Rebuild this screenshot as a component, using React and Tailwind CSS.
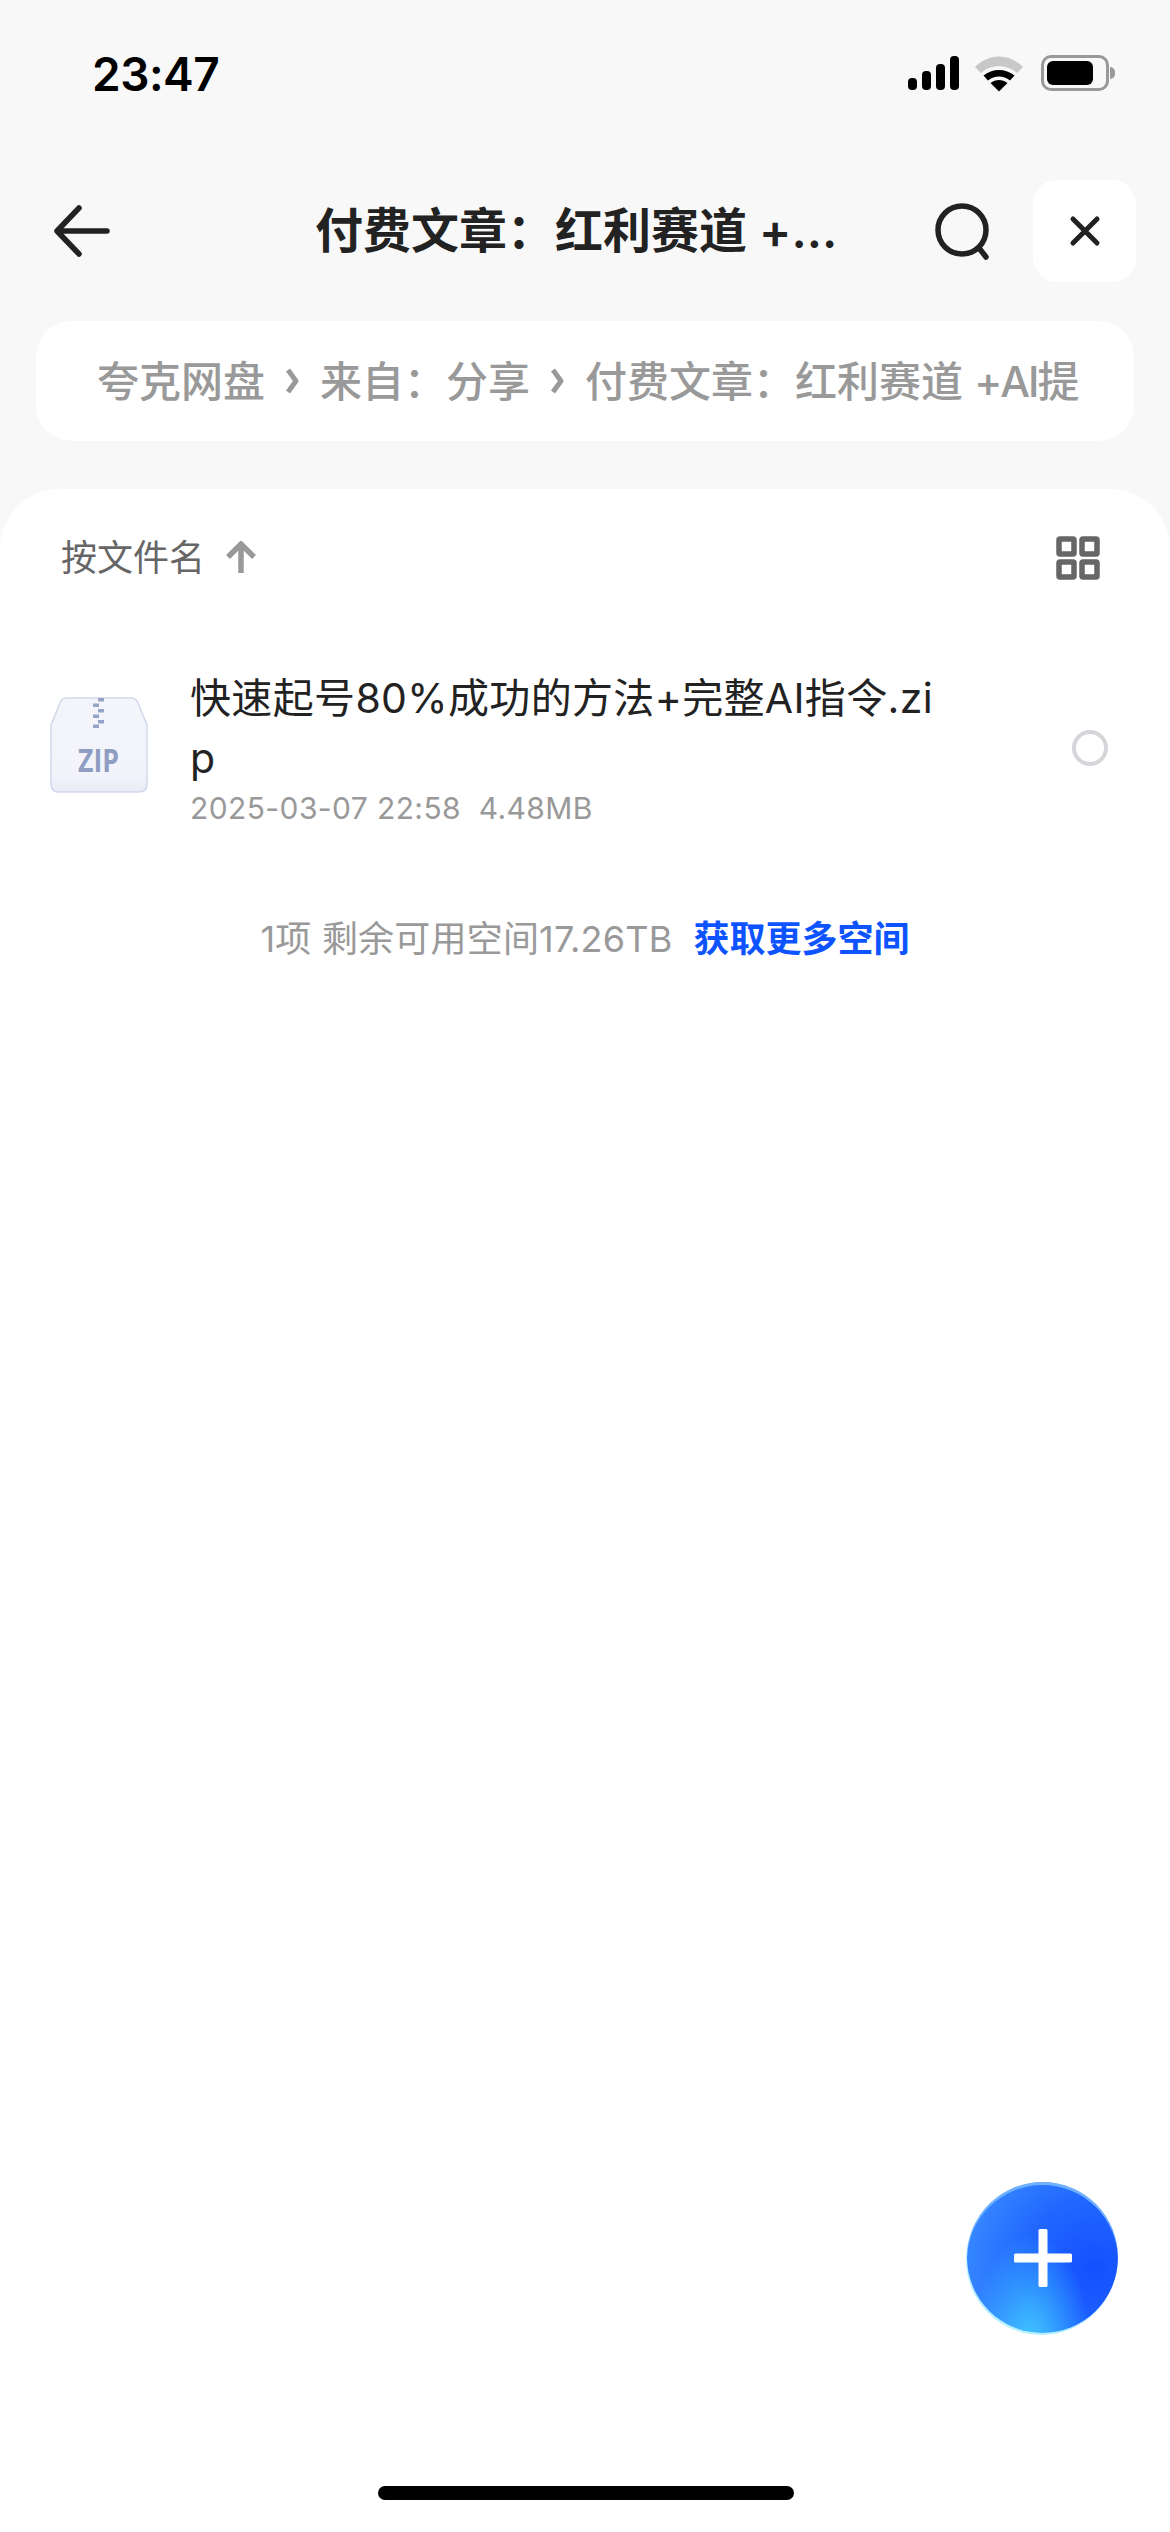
import React from 'react';

const font = { fontFamily: 'Inter, "Noto Sans CJK SC", sans-serif' };

const StatusIcons = () => (
  <div className="flex items-center">
    <svg width="52" height="36" viewBox="0 0 52 36" fill="#000">
      <rect x="0" y="23" width="9" height="12" rx="4" />
      <rect x="14" y="16" width="9" height="19" rx="4" />
      <rect x="28" y="9" width="9" height="26" rx="4" />
      <rect x="42" y="1" width="9" height="34" rx="4" />
    </svg>
    <svg className="ml-[14px]" width="50" height="38" viewBox="0 0 50 38">
      <path d="M1 13C15 -1 35 -1 49 13L43 19C33 10 17 10 7 19Z" fill="#c8c8c8" />
      <path d="M9.500 21.500C18 14 32 14 40.500 21.500L36 26.500C29.500 21 20.500 21 14 26.500Z" fill="#000" />
      <path d="M16.500 29C21.500 25 28.500 25 33.500 29L25 37.500Z" fill="#000" />
    </svg>
    <div className="ml-[17px] flex items-center">
      <div className="w-[68px] h-[36px] rounded-[10px] border-[3px] border-[#999999] p-[3px] pr-[13px]">
        <div className="w-full h-full rounded-[6px] bg-black" />
      </div>
      <div className="ml-[1px] w-[5px] h-[12px] rounded-r-full bg-[#999999]" />
    </div>
  </div>
);

const Crumb = () => (
  <svg className="mx-[20px] shrink-0" width="15" height="28" viewBox="0 0 15 28" fill="none">
    <path d="M3 3L11 14L3 25" stroke="#999999" strokeWidth="5" strokeLinejoin="round" />
  </svg>
);

const ZipIcon = () => (
  <svg width="98" height="96" viewBox="0 0 98 96">
    <defs>
      <linearGradient id="zipfill" x1="0" y1="0" x2="0" y2="1">
        <stop offset="0" stopColor="#f4f5fb" />
        <stop offset="0.8" stopColor="#f3f4fb" />
        <stop offset="1" stopColor="#e9ebf6" />
      </linearGradient>
    </defs>
    <path
      d="M10 6C11 3 13 1 17 1H81C85 1 87 3 88 6L97 28V87C97 92 94 95 89 95H9C4 95 1 92 1 87V28Z"
      fill="url(#zipfill)"
      stroke="#d3d8ec"
      strokeWidth="1.500"
    />
    <g fill="#95a3c6">
      <rect x="48" y="1" width="6" height="3.500" />
      <rect x="43" y="6.500" width="6" height="3.500" />
      <rect x="48" y="12" width="6" height="3.500" />
      <rect x="43" y="17.500" width="6" height="3.500" />
      <rect x="48" y="23" width="6" height="3.500" />
      <rect x="43" y="27.500" width="6" height="3.500" />
    </g>
    <text x="28" y="75" textLength="41" lengthAdjust="spacingAndGlyphs" fill="#8f9dc2" fontSize="33" fontWeight="700" fontFamily="Open Sans, sans-serif">ZIP</text>
  </svg>
);

const App = () => {
  return (
    <div className="relative w-[1170px] h-[2532px] overflow-hidden flex flex-col bg-[#f8f8f8]" style={font}>
      {/* status bar */}
      <div className="h-[150px] shrink-0 flex justify-between items-start pl-[92px] pr-[55px] pt-[44px]">
        <div className="text-[46px] leading-[60px] font-semibold text-black tracking-[-0.5px]">23:47</div>
        <div className="pt-[10px]"><StatusIcons /></div>
      </div>

      {/* nav */}
      <div className="h-[132px] shrink-0 flex items-center pl-[52px] pt-[30px]">
        <svg width="60" height="60" viewBox="0 0 60 60" fill="none" className="shrink-0">
          <path d="M55 30H6M27 7L5 30L27 53" stroke="#222222" strokeWidth="5.500" strokeLinecap="round" strokeLinejoin="round" />
        </svg>
        <div className="ml-[203px] w-[520px] shrink-0 text-[48px] font-semibold text-[#222222] whitespace-nowrap">
          付费文章：红利赛道 +...
        </div>
        <svg width="60" height="60" viewBox="0 0 60 60" fill="none" className="ml-[98px] shrink-0">
          <circle cx="29" cy="29" r="24" stroke="#222222" strokeWidth="5.500" />
          <path d="M46 47L53 56" stroke="#222222" strokeWidth="5.500" strokeLinecap="round" />
        </svg>
        <div className="ml-[40px] w-[103px] h-[102px] shrink-0 rounded-[24px] bg-white flex items-center justify-center">
          <svg width="32" height="32" viewBox="0 0 32 32" fill="none">
            <path d="M4 4L28 28M28 4L4 28" stroke="#222222" strokeWidth="5" strokeLinecap="round" />
          </svg>
        </div>
      </div>

      {/* breadcrumb */}
      <div className="mt-[39px] mx-[36px] w-[1098px] h-[120px] rounded-[36px] bg-white flex items-center pl-[61px] shrink-0">
        <div className="flex items-center whitespace-nowrap text-[42px] font-medium text-[#999999]">
          <span>夸克网盘</span>
          <Crumb />
          <span>来自：分享</span>
          <Crumb />
          <span>付费文章：红利赛道 <span className="tracking-[-2px]">+AI</span>提</span>
        </div>
      </div>

      {/* file sheet */}
      <div className="mt-[48px] flex-1 rounded-t-[60px] bg-white flex flex-col">
        <div className="h-[138px] shrink-0 flex items-center justify-between pl-[61px] pr-[70px]">
          <div className="flex items-center">
            <span className="text-[36px] text-[#666666]">按文件名</span>
            <svg className="ml-[20px]" width="32" height="34" viewBox="0 0 32 34" fill="none">
              <path d="M16 32V3M3 16L16 3L29 16" stroke="#999999" strokeWidth="5.500" strokeLinejoin="miter" />
            </svg>
          </div>
          <svg width="44" height="44" viewBox="0 0 44 44" fill="none" stroke="#666666" strokeWidth="5.500">
            <rect x="3" y="3" width="15" height="15" rx="1" />
            <rect x="26" y="3" width="15" height="15" rx="1" />
            <rect x="3" y="26" width="15" height="15" rx="1" />
            <rect x="26" y="26" width="15" height="15" rx="1" />
          </svg>
        </div>

        <div className="flex items-center pl-[50px] pr-[62px] mt-[41px]">
          <div className="w-[98px] shrink-0 mt-[-6px]"><ZipIcon /></div>
          <div className="ml-[42px] w-[750px] shrink-0">
            <div className="text-[41px] leading-[60px] tracking-[0.35px] text-[#222222] break-all">快速起号80%成功的方法+完整AI指令.zip</div>
            <div className="text-[30px] leading-[40px] tracking-[0.4px] text-[#999999] whitespace-pre">2025-03-07 22:58  4.48MB</div>
          </div>
          <div className="ml-auto w-[36px] h-[36px] rounded-full border-[4px] border-[#d5d5da]" />
        </div>

        <div className="mt-[87px] flex justify-center items-center text-[36px] leading-[48px]">
          <span className="text-[#999999] tracking-[0.2px]">1项 剩余可用空间17.26TB</span>
          <span className="ml-[21px] font-bold text-[#0d53ff]">获取更多空间</span>
        </div>
      </div>

      {/* add button */}
      <div className="absolute left-[967px] top-[2182px] w-[151px] h-[151px] rounded-full flex items-center justify-center bg-[radial-gradient(ellipse_at_42%_108%,#40c8ff_0%,transparent_48%),radial-gradient(circle_at_85%_58%,#1450ff_0%,#2066ff_45%,#3483ff_80%,#3a8cff_100%)] shadow-[-1px_2px_0_0_#b5f0ff,inset_0_3px_0_0_#6fb0ff]">
        <svg width="58" height="58" viewBox="0 0 58 58" fill="#ffffff">
          <rect x="24.500" y="0" width="9" height="58" rx="1.500" />
          <rect x="0" y="24.500" width="58" height="9" rx="1.500" />
        </svg>
      </div>

      {/* home indicator */}
      <div className="absolute left-[378px] top-[2486px] w-[416px] h-[14px] rounded-full bg-black" />
    </div>
  );
};

export default App;
